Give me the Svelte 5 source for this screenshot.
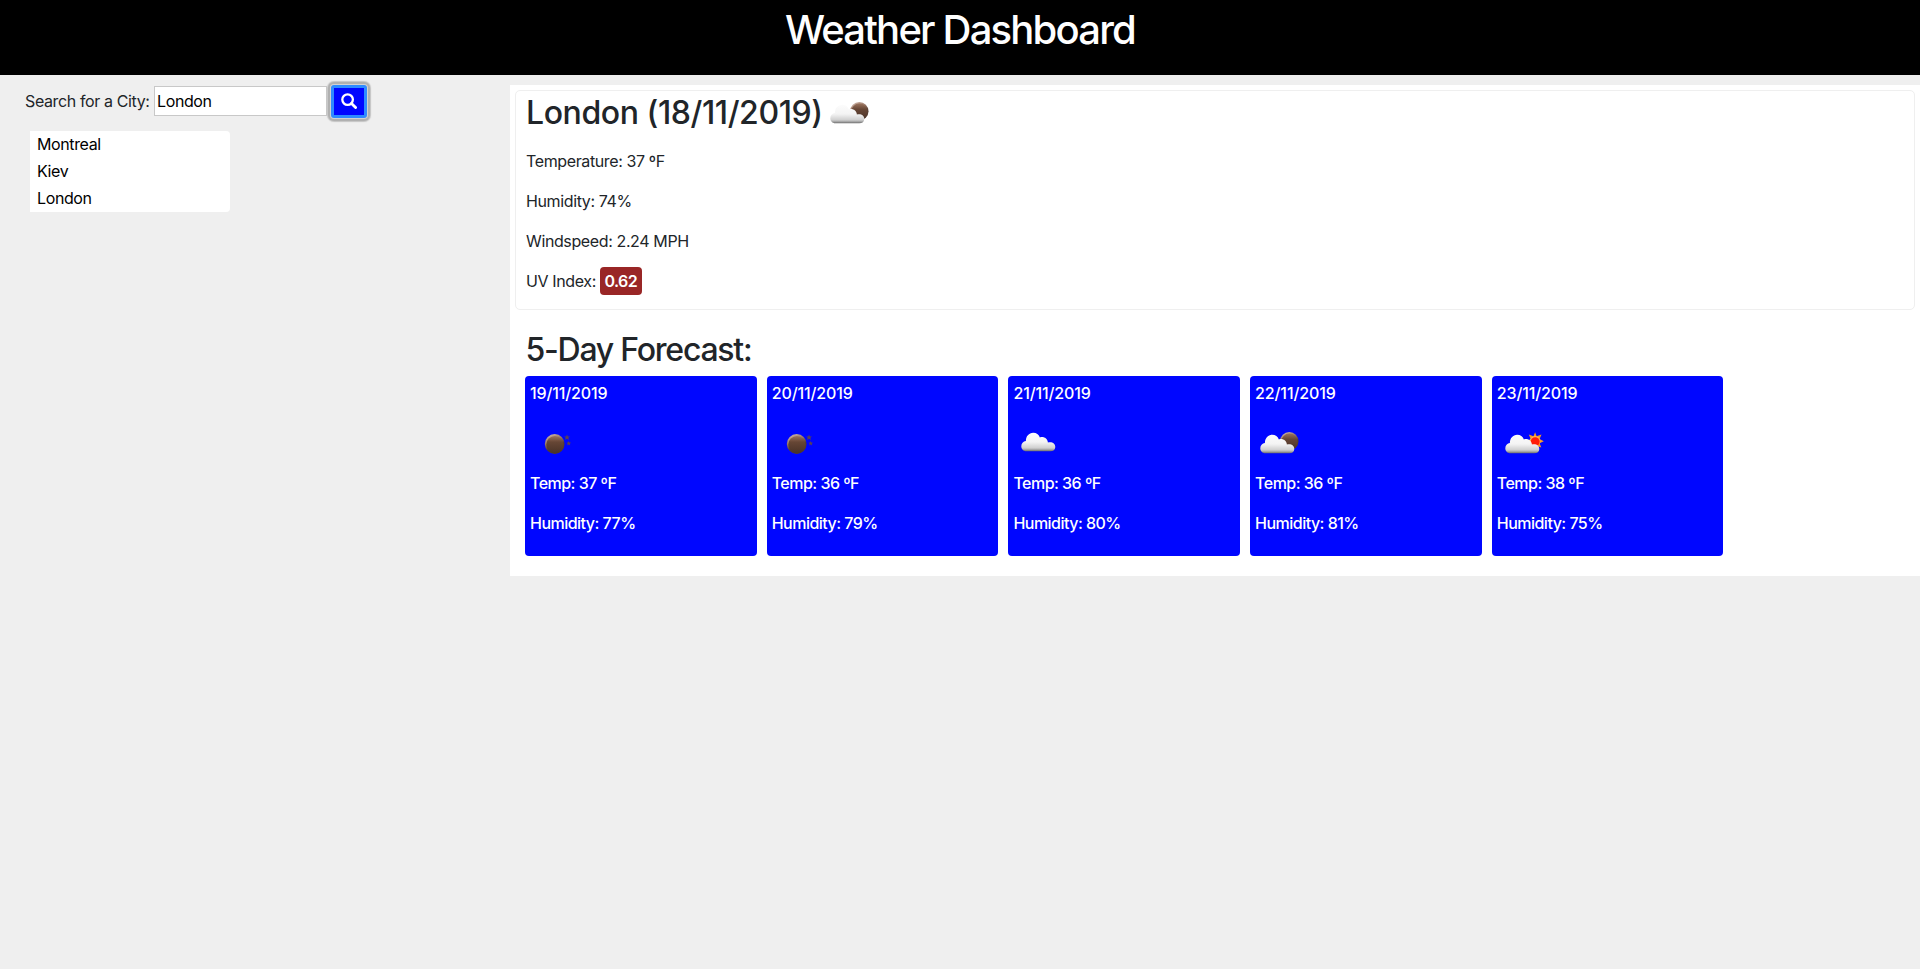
<script>
  const cities = ['Montreal', 'Kiev', 'London'];
  const forecast = [
    { date: '19/11/2019', icon: 'moon', temp: 37, humidity: 77 },
    { date: '20/11/2019', icon: 'moon', temp: 36, humidity: 79 },
    { date: '21/11/2019', icon: 'cloud', temp: 36, humidity: 80 },
    { date: '22/11/2019', icon: 'broken', temp: 36, humidity: 81 },
    { date: '23/11/2019', icon: 'sun', temp: 38, humidity: 75 }
  ];
  let query = $state('London');
</script>

{#snippet cloud(dx, dy)}
  <path
    transform="translate({dx} {dy})"
    fill="url(#cloudFill)"
    d="M10.3 35.3C7.3 35.3 5.3 33 5.3 30.3C5.3 27.4 7.2 25.4 9.9 25C9.9 20.3 12.9 16.7 17.2 16.7C20.4 16.7 22.9 18.6 23.9 21.4C27.8 20.2 31.6 22.6 31.9 26.6C36.1 25.5 39.3 27.7 39.3 30.9C39.3 33.5 37.3 35.3 34.4 35.3Z"
  />
{/snippet}

{#snippet weather(kind)}
  <svg class="weather" width="50" height="50" viewBox="0 0 50 50" aria-hidden="true">
    {#if kind === 'moon'}
      <circle cx="24.7" cy="26" r="9.9" fill="url(#moonRim)" />
      <circle cx="25" cy="26.7" r="8.7" fill="url(#moonFill)" />
      <path fill="#5c4350" d="M37 16.4l.8 2 2.2.1-1.7 1.3.6 2.2-1.9-1.2-1.9 1.2.6-2.2-1.7-1.3 2.2-.1zM38.7 23l.6 1.6 1.8.1-1.4 1.1.5 1.7-1.5-1-1.5 1 .5-1.7-1.4-1.1 1.8-.1z" />
    {:else if kind === 'cloud'}
      {@render cloud(3, -2)}
    {:else if kind === 'broken'}
      <circle cx="34.3" cy="23.2" r="9.2" fill="url(#moonRim)" />
      <circle cx="34.4" cy="23.8" r="8.2" fill="url(#moonFill)" />
      {@render cloud(0, 0)}
    {:else}
      <g transform="translate(-.7 0)">
        <path fill="#f79b22" d="M38.8 14.3l1.5 4 4.9-1.8-1.9 4.5 4.2 2.3-4.2 1.9 1.7 4.4-4.5-1.7-1.7 4-1.7-4-4.6 1.8 1.9-4.4-4-2 4-2.2-1.9-4.6 4.7 1.8z" />
        <circle cx="38.8" cy="23.3" r="5.3" fill="#ffb054" />
        <circle cx="38.9" cy="23.8" r="4.5" fill="#ff1d08" />
      </g>
      {@render cloud(3, 0)}
    {/if}
  </svg>
{/snippet}

<svg class="defs" width="0" height="0" aria-hidden="true">
  <defs>
    <linearGradient id="cloudFill" x1="0" y1="0" x2="0" y2="1">
      <stop offset="0" stop-color="#fcfcfc" />
      <stop offset=".5" stop-color="#f4f4f4" />
      <stop offset=".82" stop-color="#cfcfcf" />
      <stop offset=".91" stop-color="#a5a5a5" />
      <stop offset="1" stop-color="#686868" />
    </linearGradient>
    <linearGradient id="moonRim" x1=".2" y1="0" x2=".65" y2="1">
      <stop offset="0" stop-color="#d0b8aa" />
      <stop offset=".35" stop-color="#9a7867" />
      <stop offset=".65" stop-color="#513b31" />
      <stop offset="1" stop-color="#513b31" />
    </linearGradient>
    <linearGradient id="moonFill" x1="0" y1="0" x2="0" y2="1">
      <stop offset="0" stop-color="#9a735d" />
      <stop offset=".35" stop-color="#664635" />
      <stop offset="1" stop-color="#493328" />
    </linearGradient>
  </defs>
</svg>

<header><h1>Weather Dashboard</h1></header>
<div class="layout">
  <aside>
    <div class="search">
      <label for="city">Search for a City:</label>
      <input id="city" type="text" bind:value={query} />
      <button aria-label="Search">
        <svg width="16" height="16" viewBox="0 0 16 16"><circle cx="6.6" cy="6.6" r="5.3" fill="none" stroke="#fff" stroke-width="2.3" /><path d="M10.5 10.5L14.6 14.6" stroke="#fff" stroke-width="2.8" stroke-linecap="round" /></svg>
      </button>
    </div>
    <ul>
      {#each cities as city}<li>{city}</li>{/each}
    </ul>
  </aside>
  <main>
    <section class="current">
      <h2><span class="place">London (18/11/2019)</span>{@render weather('broken')}</h2>
      <p>Temperature: 37 ºF</p>
      <p>Humidity: 74%</p>
      <p>Windspeed: 2.24 MPH</p>
      <p>UV Index: <span class="badge">0.62</span></p>
    </section>
    <h2 class="title">5-Day Forecast:</h2>
    <div class="days">
      {#each forecast as day}
        <article>
          <p class="date">{day.date}</p>
          {@render weather(day.icon)}
          <p>Temp: {day.temp} ºF</p>
          <p>Humidity: {day.humidity}%</p>
        </article>
      {/each}
    </div>
  </main>
</div>

<style>
  :global(body) {
    background: #efefef;
    color: #212529;
    font: 400 16px/24px Inter, sans-serif;
    letter-spacing: -0.38px;
  }
  * { box-sizing: border-box; }
  .defs { position: absolute; }
  h1, h2, p, ul { margin: 0; padding: 0; }
  header {
    height: 75px;
    padding-top: 6px;
    background: #000;
    color: #fff;
    text-align: center;
  }
  h1 { font-size: 40px; font-weight: 550; line-height: 48px; letter-spacing: -1.8px; }
  .layout { display: grid; grid-template-columns: 510px 1410px; align-items: start; padding-top: 10px; }
  .search { display: flex; align-items: center; height: 32px; padding-left: 25px; }
  label { width: 129px; white-space: nowrap; }
  input {
    width: 173px;
    height: 30px;
    padding: 1px 2px;
    border: 1px solid #c8c8c8;
    border-radius: 0;
    background: #fff;
    color: #000;
    font: inherit;
    letter-spacing: inherit;
    outline: none;
  }
  button {
    display: flex;
    align-items: center;
    justify-content: center;
    width: 36px;
    height: 33px;
    margin-left: 4px;
    padding: 0;
    border: 3px solid #2e8bff;
    border-radius: 3px;
    background: #0006ff;
    box-shadow: 0 0 0 1px #d2d2d2, 0 0 0 3px #b0b0b0, 0 0 1px 4px #c4c4c4;
  }
  ul {
    width: 200px;
    margin: 14px 0 0 30px;
    padding-left: 7px;
    border-radius: 0 4px 4px 0;
    background: #fff;
    color: #000;
    list-style: none;
  }
  li { height: 27px; line-height: 26px; }
  main { height: 491px; padding: 5px; background: #fff; }
  .current {
    height: 220px;
    padding: 3px 10px 0;
    border: 1px solid #efefef;
    border-radius: 5px;
  }
  h2 {
    display: flex;
    height: 40px;
    font-size: 32px;
    font-weight: 530;
    line-height: 38px;
    letter-spacing: -0.42px;
  }
  .place { width: 298.5px; white-space: nowrap; }
  h2 .weather { margin-top: -6px; }
  .current p { margin-bottom: 16px; }
  .current h2 + p { margin-top: 15px; }
  .badge {
    display: inline-block;
    height: 28px;
    margin: -2px 0 -2px -0.5px;
    padding: 0 5px;
    border-radius: 4px;
    background: #992626;
    color: #fff;
    font-weight: 600;
    line-height: 28px;
    letter-spacing: -0.6px;
  }
  .title { margin: 21px 0 0 10.5px; height: 45px; letter-spacing: -1.25px; }
  .days { display: grid; grid-template-columns: repeat(5, 1fr); gap: 10px; width: 1198.5px; margin-left: 10px; }
  article {
    height: 180px;
    padding: 5px;
    border-radius: 4px;
    background: #0006ff;
    color: #fff;
    font-weight: 530;
    letter-spacing: -0.52px;
  }
  article p { margin-bottom: 16px; }
  article .date { letter-spacing: -0.12px; }
  .weather { display: block; flex: none; }
  article .weather { margin: -3px 0 3px; }
</style>
